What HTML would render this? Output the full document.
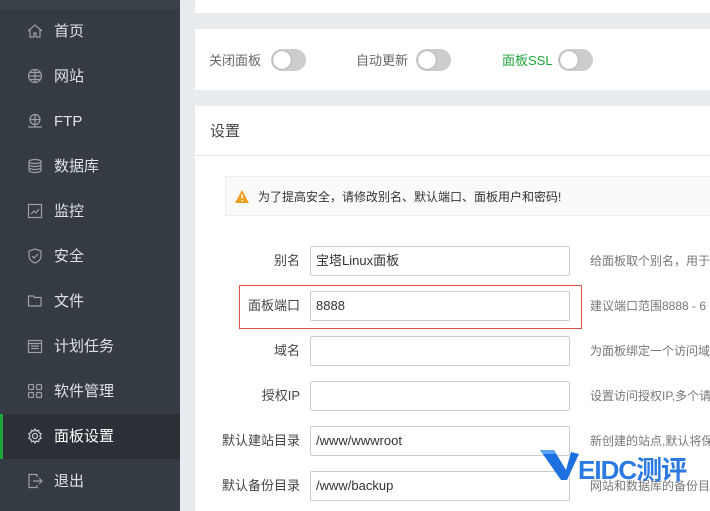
<!DOCTYPE html>
<html><head><meta charset="utf-8"><style>
*{margin:0;padding:0;box-sizing:border-box}
body{width:710px;height:511px;overflow:hidden;background:#e9ecef;font-family:"Liberation Sans","Noto Sans CJK SC",sans-serif;position:relative}
.side{position:absolute;left:0;top:0;width:180px;height:511px;background:#353b43}
.side .top{position:absolute;left:0;top:0;width:180px;height:9px;background:#3b4249}
.it{position:absolute;left:0;width:180px;height:45px;color:#dfe2e5;font-size:15px;line-height:45px}
.it span{position:absolute;left:54px}
.it svg{position:absolute;left:27px;top:14px}
.it.act{background:#2b3036;color:#fff}
.it.act:before{content:"";position:absolute;left:0;top:0;width:3px;height:45px;background:#20a53a}
.card{position:absolute;left:195px;width:515px;background:#fff}
.t{position:absolute;font-size:13px;color:#666;line-height:16px}
.tg{position:absolute;width:35px;height:22px;border-radius:11px;background:#ccc}
.tg:after{content:"";position:absolute;left:1px;top:1px;width:20px;height:20px;border-radius:50%;background:#fff;box-shadow:0 0 1px 1px #aaa inset}
.lab{position:absolute;width:100px;left:200px;text-align:right;font-size:13px;color:#444;line-height:16px}
.inp{position:absolute;left:310px;width:260px;height:30px;border:1px solid #ccc;border-radius:2px;background:#fff;font-size:13px;color:#333;padding-left:5px;line-height:28px}
.hint{position:absolute;left:590px;font-size:12px;color:#777;white-space:nowrap;line-height:16px}
</style></head><body>
<div class="side"><div class="top"></div>
<div class="it" style="top:9px"><svg width="16" height="16" viewBox="0 0 16 16" fill="none" stroke="#9aa0a6" stroke-width="1.2"><path d="M1 8L8 2l7 6M3 6.5V14h4v-4h2v4h4V6.5"/></svg><span>首页</span></div>
<div class="it" style="top:54px"><svg width="16" height="16" viewBox="0 0 16 16" fill="none" stroke="#9aa0a6" stroke-width="1.2"><circle cx="8" cy="8" r="6.5"/><path d="M1.5 8h13M8 1.5v13M3 4.5h10M3 11.5h10"/></svg><span>网站</span></div>
<div class="it" style="top:99px"><svg width="16" height="16" viewBox="0 0 16 16" fill="none" stroke="#9aa0a6" stroke-width="1.2"><circle cx="8" cy="6.5" r="5"/><path d="M3 6.5h10M8 1.5v10M1 14h14M8 11.5V14"/></svg><span>FTP</span></div>
<div class="it" style="top:144px"><svg width="16" height="16" viewBox="0 0 16 16" fill="none" stroke="#9aa0a6" stroke-width="1.2"><ellipse cx="8" cy="3.5" rx="6" ry="2"/><path d="M2 3.5v9c0 1.1 2.7 2 6 2s6-.9 6-2v-9M2 6.5c0 1.1 2.7 2 6 2s6-.9 6-2M2 9.5c0 1.1 2.7 2 6 2s6-.9 6-2"/></svg><span>数据库</span></div>
<div class="it" style="top:189px"><svg width="16" height="16" viewBox="0 0 16 16" fill="none" stroke="#9aa0a6" stroke-width="1.2"><rect x="1.5" y="1.5" width="13" height="13"/><path d="M4 11l3-3 2 2 3-4"/></svg><span>监控</span></div>
<div class="it" style="top:234px"><svg width="16" height="16" viewBox="0 0 16 16" fill="none" stroke="#9aa0a6" stroke-width="1.2"><path d="M8 1l6 2v5c0 3.5-3 6-6 7-3-1-6-3.5-6-7V3z"/><path d="M5 8l2 2 4-4"/></svg><span>安全</span></div>
<div class="it" style="top:279px"><svg width="16" height="16" viewBox="0 0 16 16" fill="none" stroke="#9aa0a6" stroke-width="1.2"><path d="M1.5 3h5l1 1.5h6.5V13h-12.5z"/></svg><span>文件</span></div>
<div class="it" style="top:324px"><svg width="16" height="16" viewBox="0 0 16 16" fill="none" stroke="#9aa0a6" stroke-width="1.2"><rect x="1.5" y="2.5" width="13" height="12"/><path d="M1.5 5.5h13M4 8h8M4 10.5h8"/></svg><span>计划任务</span></div>
<div class="it" style="top:369px"><svg width="16" height="16" viewBox="0 0 16 16" fill="none" stroke="#9aa0a6" stroke-width="1.2"><rect x="1.5" y="1.5" width="5" height="5" rx="1"/><rect x="9.5" y="1.5" width="5" height="5" rx="1"/><rect x="1.5" y="9.5" width="5" height="5" rx="1"/><rect x="9.5" y="9.5" width="5" height="5" rx="1"/></svg><span>软件管理</span></div>
<div class="it act" style="top:414px"><svg width="16" height="16" viewBox="0 0 16 16" fill="none" stroke="#c8ccd0" stroke-width="1.2"><circle cx="8" cy="8" r="2.5"/><path d="M8 1l1.3 2 2.3-.7.4 2.4 2.2 1L13 8l1.2 2.3-2.2 1-.4 2.4-2.3-.7L8 15l-1.3-2-2.3.7-.4-2.4-2.2-1L3 8 1.8 5.7l2.2-1 .4-2.4 2.3.7z"/></svg><span>面板设置</span></div>
<div class="it" style="top:459px"><svg width="16" height="16" viewBox="0 0 16 16" fill="none" stroke="#9aa0a6" stroke-width="1.2"><path d="M10 4V1.5H2v13h8V12M6 8h9M12 5l3 3-3 3"/></svg><span>退出</span></div>
</div>

<div class="card" style="top:0;height:13px"></div>
<div class="card" style="top:29px;height:61px">
 <div class="t" style="left:14px;top:24px">关闭面板</div><div class="tg" style="left:76px;top:20px"></div>
 <div class="t" style="left:161px;top:24px">自动更新</div><div class="tg" style="left:221px;top:20px"></div>
 <div class="t" style="left:307px;top:24px;color:#20a53a">面板SSL</div><div class="tg" style="left:363px;top:20px"></div>
</div>
<div class="card" style="top:106px;height:405px">
 <div style="position:absolute;left:15px;top:17px;font-size:15px;color:#444;line-height:18px">设置</div>
 <div style="position:absolute;left:0;top:49px;width:515px;height:1px;background:#e5e5e5"></div>
 <div style="position:absolute;left:30px;top:70px;width:485px;height:40px;background:#fafafa;border:1px solid #eee;border-right:none">
  <svg style="position:absolute;left:9px;top:13px" width="14" height="13" viewBox="0 0 14 13"><path d="M7 0L14 13H0z" fill="#f0a020"/><path d="M7 4.5v4M7 10v1.2" stroke="#fff" stroke-width="1.5"/></svg>
  <div style="position:absolute;left:32px;top:12px;font-size:12px;color:#333;line-height:16px">为了提高安全，请修改别名、默认端口、面板用户和密码!</div>
 </div>
</div>

<div style="position:absolute;left:239px;top:285px;width:343px;height:44px;border:1px solid #d9534f"></div>

<div class="lab" style="top:253px">别名</div><div class="inp" style="top:246px">宝塔Linux面板</div><div class="hint" style="top:253px">给面板取个别名，用于</div>
<div class="lab" style="top:298px">面板端口</div><div class="inp" style="top:291px">8888</div><div class="hint" style="top:298px">建议端口范围8888 - 6</div>
<div class="lab" style="top:343px">域名</div><div class="inp" style="top:336px"></div><div class="hint" style="top:343px">为面板绑定一个访问域</div>
<div class="lab" style="top:388px">授权IP</div><div class="inp" style="top:381px"></div><div class="hint" style="top:388px">设置访问授权IP,多个请</div>
<div class="lab" style="top:433px">默认建站目录</div><div class="inp" style="top:426px">/www/wwwroot</div><div class="hint" style="top:433px">新创建的站点,默认将保</div>
<div class="lab" style="top:478px">默认备份目录</div><div class="inp" style="top:471px">/www/backup</div><div class="hint" style="top:478px">网站和数据库的备份目</div>

<svg style="position:absolute;left:538px;top:444px" width="45" height="40" viewBox="0 0 45 40"><path d="M2 6h14l12 20L33 8l8 2-12 26h-6z" fill="#1e6fe0"/><path d="M2 6h14l2 4H5z" fill="#5aa5f5"/></svg>
<div style="position:absolute;left:578px;top:450px;font-size:26px;font-weight:bold;color:#2a7ae2;letter-spacing:-1px">EIDC测评</div>
</body></html>
